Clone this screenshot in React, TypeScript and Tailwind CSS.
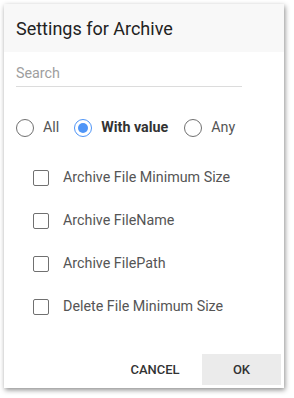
import React, { useState } from 'react';

const fields = [
  'Archive File Minimum Size',
  'Archive FileName',
  'Archive FilePath',
  'Delete File Minimum Size',
];

type Mode = 'all' | 'value' | 'any';

function Radio({ checked }: { checked: boolean }) {
  return (
    <span
      className={
        checked
          ? 'w-[18px] h-[18px] rounded-full border-[1.5px] border-[#4f95f7] flex items-center justify-center shrink-0'
          : 'w-[18px] h-[18px] rounded-full border-[1.5px] border-[#707070] shrink-0'
      }
    >
      {checked && <span className="w-[10px] h-[10px] rounded-full bg-[#4f95f7]" />}
    </span>
  );
}

export default function App() {
  const [mode, setMode] = useState<Mode>('value');
  const [checked, setChecked] = useState<Record<string, boolean>>({});

  return (
    <div className="w-[294px] h-[398px] bg-white p-[4px] font-['Roboto',_'Liberation_Sans',_sans-serif]">
      <div className="w-[280px] h-[384px] bg-white shadow-[1px_2px_5px_rgba(0,0,0,0.45)] flex flex-col">
        {/* Header */}
        <div className="h-12 bg-[#f8f8f8] px-3 flex items-center">
          <span className="text-[18px] text-[#222]">Settings for Archive</span>
        </div>

        <div className="px-3 flex flex-col">
          {/* Search */}
          <div className="mt-[10px] w-[226px] h-[25px] border-b border-[#dcdcdc] flex items-center text-[14.3px] text-[#9e9e9e]">
            Search
          </div>

          {/* Mode radios */}
          <div className="mt-[29px] h-6 flex items-center text-[14.3px] text-[#555]">
            <button className="flex items-center gap-[9px]" onClick={() => setMode('all')}>
              <Radio checked={mode === 'all'} />
              <span className={mode === 'all' ? 'font-bold text-[#333]' : ''}>All</span>
            </button>
            <button className="flex items-center gap-[9px] ml-[15px]" onClick={() => setMode('value')}>
              <Radio checked={mode === 'value'} />
              <span className={mode === 'value' ? 'font-bold text-[#333]' : ''}>With value</span>
            </button>
            <button className="flex items-center gap-[9px] ml-[16px]" onClick={() => setMode('any')}>
              <Radio checked={mode === 'any'} />
              <span className={mode === 'any' ? 'font-bold text-[#333]' : ''}>Any</span>
            </button>
          </div>

          {/* Field list */}
          <div className="mt-4 flex flex-col pl-[17px]">
            {fields.map((f) => (
              <label key={f} className="h-[43px] flex items-center gap-[14px] text-[14.3px] text-[#555] cursor-pointer">
                <span
                  onClick={() => setChecked({ ...checked, [f]: !checked[f] })}
                  className="w-4 h-4 border-[1.5px] border-[#707070] rounded-[2px] shrink-0"
                />
                {f}
              </label>
            ))}
          </div>
        </div>

        {/* Actions */}
        <div className="mt-auto mb-[3px] mr-[3px] flex justify-end items-center gap-[15px]">
          <button className="w-16 h-[31px] text-[13px] font-medium text-[#333] uppercase">Cancel</button>
          <button className="w-[79px] h-[31px] bg-[#ebebeb] text-[13px] font-medium text-[#333] uppercase">OK</button>
        </div>
      </div>
    </div>
  );
}
